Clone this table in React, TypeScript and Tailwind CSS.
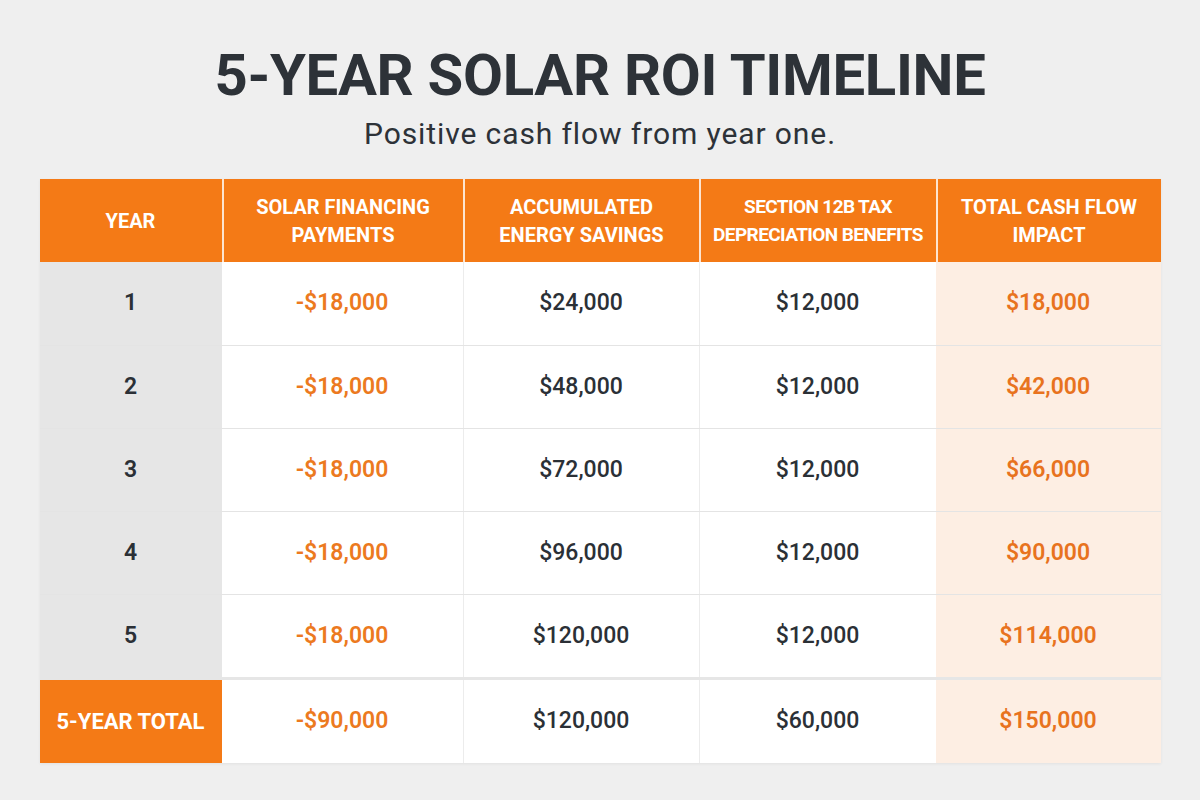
import React from 'react';

const rows = [
  { year: '1', pay: '-$18,000', save: '$24,000', tax: '$12,000', total: '$18,000' },
  { year: '2', pay: '-$18,000', save: '$48,000', tax: '$12,000', total: '$42,000' },
  { year: '3', pay: '-$18,000', save: '$72,000', tax: '$12,000', total: '$66,000' },
  { year: '4', pay: '-$18,000', save: '$96,000', tax: '$12,000', total: '$90,000' },
  { year: '5', pay: '-$18,000', save: '$120,000', tax: '$12,000', total: '$114,000' },
];

const cols = 'grid grid-cols-[182px_241px_236px_237px_225px]';

const App = () => {
  return (
    <div
      className="w-[1200px] h-[800px] bg-[#efefef] flex flex-col items-center text-[#2b3036]"
      style={{ fontFamily: 'Roboto, "Liberation Sans", sans-serif' }}
    >
      <h1 className="mt-[42px] text-[58px] leading-[66px] font-bold tracking-[-0.3px] text-[#2d3238]">
        5-YEAR SOLAR ROI TIMELINE
      </h1>
      <p className="mt-[7px] text-[30px] leading-[38px] tracking-[0.03em] text-[#2d3238]">Positive cash flow from year one.</p>

      <div className="mt-[26px] w-[1121px] shadow-[0_1px_3px_rgba(0,0,0,0.06)]">
        {/* header */}
        <div className={`${cols} h-[83px] bg-[#f47a16] text-white font-bold text-[20px] leading-[28px] uppercase`}>
          <div className="flex items-center justify-center text-center">Year</div>
          <div className="flex items-center justify-center text-center border-l-2 border-white/80">
            Solar Financing<br />Payments
          </div>
          <div className="flex items-center justify-center text-center border-l-2 border-white/80">
            Accumulated<br />Energy Savings
          </div>
          <div className="flex items-center justify-center text-center border-l-2 border-white/80 tracking-[-0.6px] text-[19px]">
            Section 12B Tax<br />Depreciation Benefits
          </div>
          <div className="flex items-center justify-center text-center border-l-2 border-white/80">
            Total Cash Flow<br />Impact
          </div>
        </div>

        {rows.map((r, i) => (
          <div key={r.year} className={`${cols} h-[83px] text-[23px] ${i > 0 ? 'border-t border-[#e4e4e4]' : ''}`}>
            <div className="flex items-center justify-center bg-[#e6e6e6] font-semibold text-[#2b3036]">{r.year}</div>
            <div className="flex items-center justify-center bg-white font-semibold text-[#ec7a1f]">{r.pay}</div>
            <div className="flex items-center justify-center bg-white border-l border-[#ececec] font-medium text-[#2b3036]">{r.save}</div>
            <div className="flex items-center justify-center bg-white border-l border-[#ececec] font-medium text-[#2b3036]">{r.tax}</div>
            <div className="flex items-center justify-center bg-[#fdeee3] font-semibold text-[#e8731e]">{r.total}</div>
          </div>
        ))}

        <div className={`${cols} h-[86px] text-[23px] border-t-[3px] border-[#e6e6e6]`}>
          <div className="flex items-center justify-center bg-[#f47a16] text-white font-bold text-[22px]">5-YEAR TOTAL</div>
          <div className="flex items-center justify-center bg-white font-semibold text-[#ec7a1f]">-$90,000</div>
          <div className="flex items-center justify-center bg-white border-l border-[#ececec] font-medium text-[#2b3036]">$120,000</div>
          <div className="flex items-center justify-center bg-white border-l border-[#ececec] font-medium text-[#2b3036]">$60,000</div>
          <div className="flex items-center justify-center bg-[#fdeee3] font-semibold text-[#e8731e]">$150,000</div>
        </div>
      </div>
    </div>
  );
};

export default App;
